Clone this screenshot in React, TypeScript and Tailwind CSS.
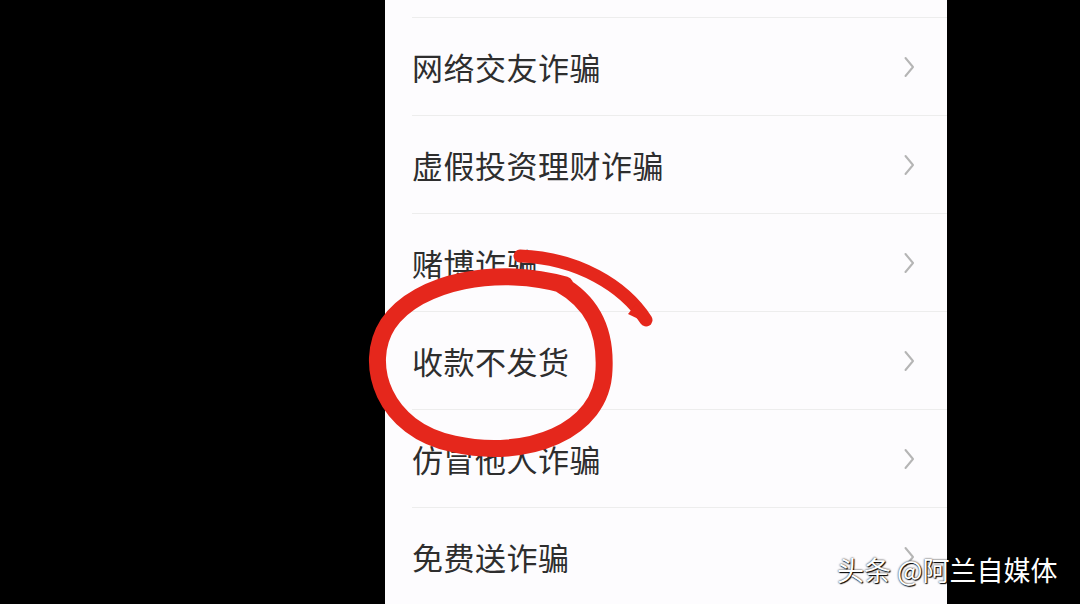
const items = ["网络交友诈骗", "虚假投资理财诈骗", "赌博诈骗", "收款不发货", "仿冒他人诈骗", "免费送诈骗"];

const Chevron = () => (
    <svg width="12" height="22" viewBox="0 0 12 22" fill="none">
        <path d="M2.5 2 L10 11 L2.5 20" stroke="#b5b5b5" strokeWidth="2" strokeLinecap="round" strokeLinejoin="round" />
    </svg>
);

const Row = ({ label }: { label: string }) => (
    <div className="pl-[27px]">
        <div className="h-[98px] flex items-center justify-between border-b border-[#ededed] pr-[32px]">
            <span className="text-[31px] leading-none text-[#2e2e2e] tracking-[0.5px]">{label}</span>
            <Chevron />
        </div>
    </div>
);

// hand-drawn red ring around one of the rows
const Scribble = () => (
    <svg className="absolute inset-0 pointer-events-none" width="1080" height="604" viewBox="0 0 1080 604">
        <path
            d="M565 285 C500 266 418 280 388 324 C362 364 384 430 454 444 C526 460 602 432 604 370 C606 330 592 302 560 284"
            stroke="#e5271c"
            strokeWidth="17"
            fill="none"
            strokeLinecap="round"
        />
        <path
            d="M520 256 C578 258 624 286 646 320"
            stroke="#e5271c"
            strokeWidth="13"
            fill="none"
            strokeLinecap="round"
        />
        <path d="M636 304 L651 325 L628 314 Z" fill="#e5271c" />
    </svg>
);

export default function App() {
    return (
        <div className="relative w-[1080px] h-[604px] bg-black overflow-hidden" style={{ fontFamily: '"Noto Sans CJK SC", "Noto Sans", sans-serif' }}>
            <div className="ml-[385px] w-[562px] h-full bg-[#fdfcfe] overflow-hidden">
                <div className="pl-[27px]">
                    <div className="h-[18px] border-b border-[#ededed]" />
                </div>
                {items.map((label) => (
                    <Row key={label} label={label} />
                ))}
            </div>

            <Scribble />

            <div className="absolute left-[837px] top-[556px] text-[27px] leading-none text-white whitespace-nowrap [text-shadow:0_0_2px_#000,1px_1px_1px_#000]">
                头条 @阿兰自媒体
            </div>
        </div>
    );
}
